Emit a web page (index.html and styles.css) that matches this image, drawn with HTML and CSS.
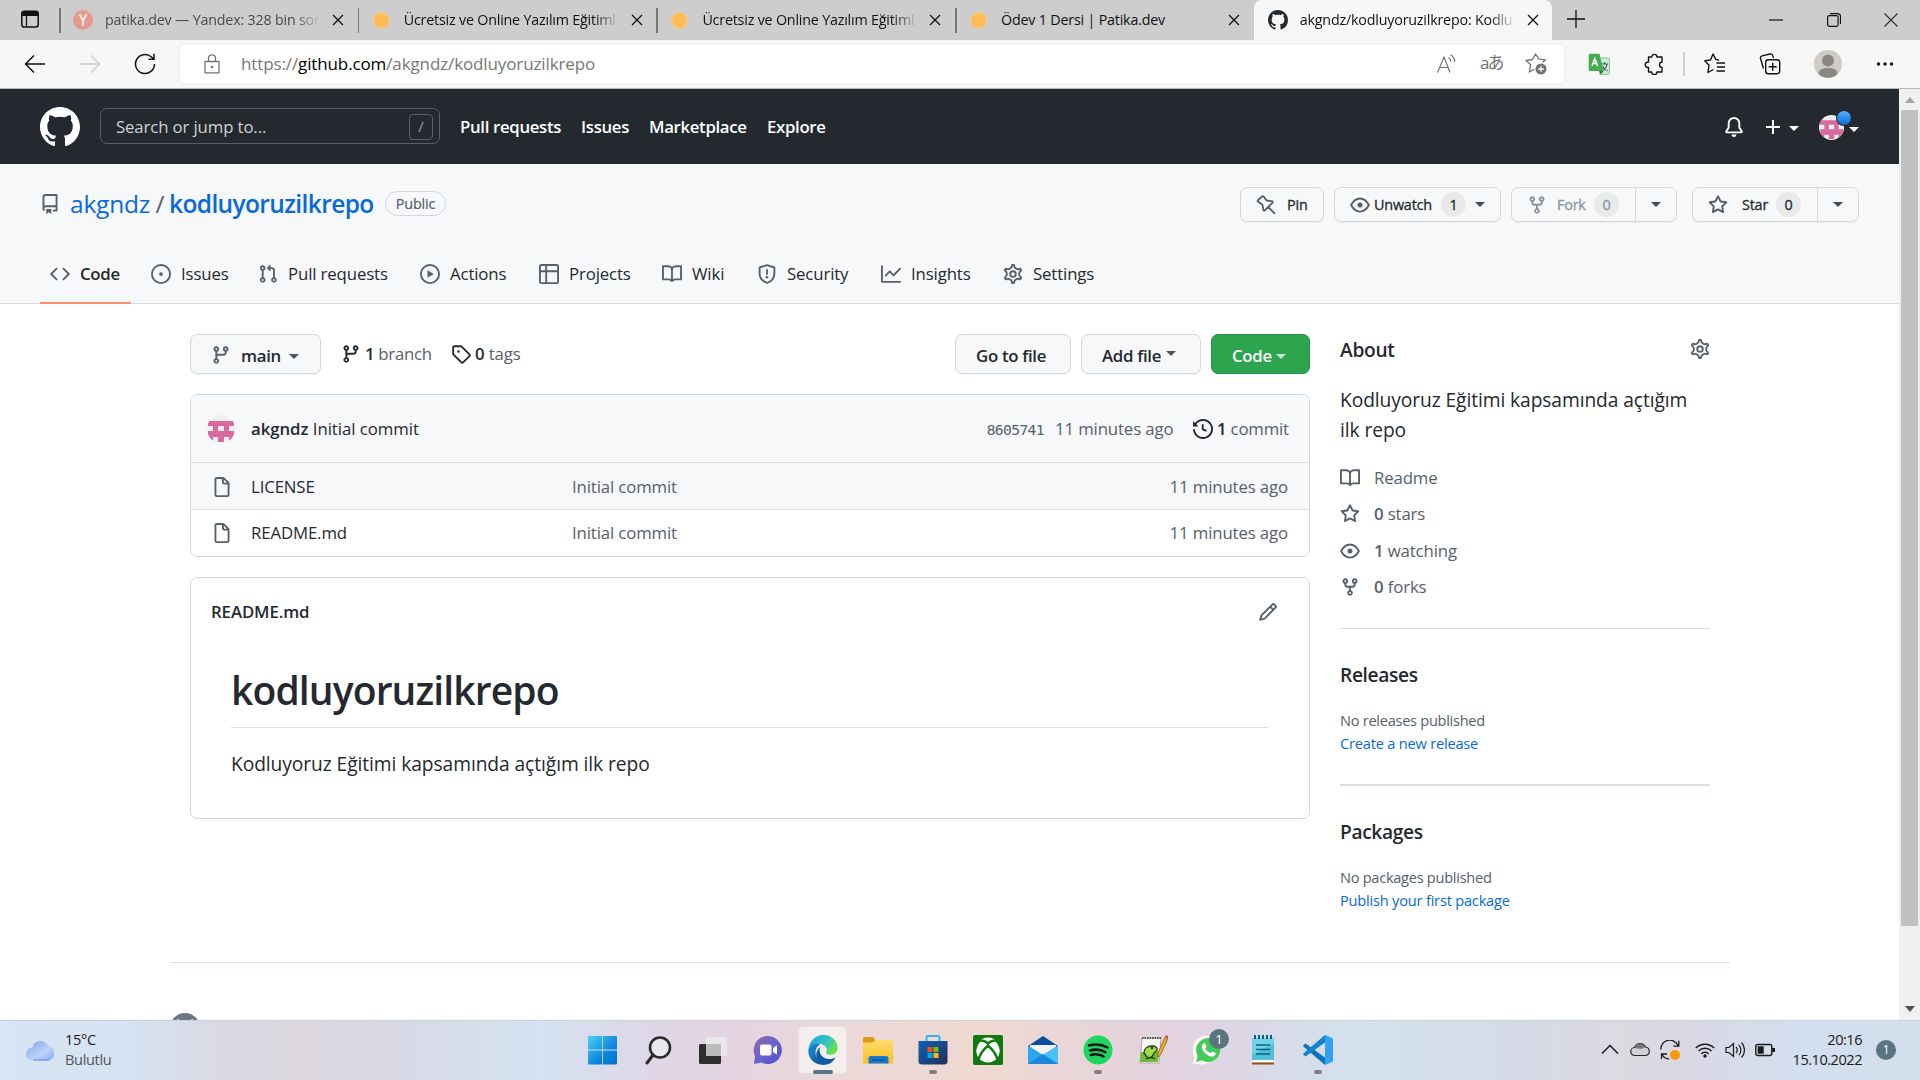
FILE: index.html
```html
<!DOCTYPE html>
<html lang="tr">
<head>
<meta charset="utf-8">
<title>akgndz/kodluyoruzilkrepo: Kodluyoruz Eğitimi kapsamında açtığım ilk repo</title>
<link rel="stylesheet" href="styles.css">
</head>
<body>
<svg class="defs" width="0" height="0">
  <defs>
    <linearGradient id="g-win" x1="0" y1="0" x2="1" y2="1"><stop offset="0" stop-color="#4cd0fb"/><stop offset=".6" stop-color="#0c86dc"/><stop offset="1" stop-color="#0072d0"/></linearGradient>
    <linearGradient id="g-cloud" x1="0" y1="0" x2="1" y2="1"><stop offset="0" stop-color="#7ea2ee"/><stop offset=".6" stop-color="#bdd3f8"/><stop offset="1" stop-color="#86a7ee"/></linearGradient>
    <linearGradient id="g-chat" x1="0" y1="0" x2="1" y2="1"><stop offset="0" stop-color="#8d6aa8"/><stop offset=".5" stop-color="#6b63cf"/><stop offset="1" stop-color="#4a4fc4"/></linearGradient>
    <linearGradient id="g-edge" x1="0" y1="0" x2="1" y2=".5"><stop offset="0" stop-color="#1b9de2"/><stop offset=".6" stop-color="#2fc3c9"/><stop offset="1" stop-color="#6be04e"/></linearGradient>
    <linearGradient id="g-edge2" x1="0" y1="0" x2="1" y2="1"><stop offset="0" stop-color="#1c93dd"/><stop offset="1" stop-color="#0b4a93"/></linearGradient>
    <linearGradient id="g-store" x1="0" y1="0" x2="1" y2="1"><stop offset="0" stop-color="#0b63b5"/><stop offset="1" stop-color="#222e58"/></linearGradient>
    <linearGradient id="g-folder" x1="0" y1="0" x2="0" y2="1"><stop offset="0" stop-color="#ffdc6b"/><stop offset="1" stop-color="#fcc021"/></linearGradient>
    <linearGradient id="g-dot" x1="0" y1="0" x2="0" y2="1"><stop offset="0" stop-color="#54aeff"/><stop offset="1" stop-color="#0969da"/></linearGradient>
  </defs>
  <symbol id="mark" viewBox="0 0 16 16"><path d="M8 0C3.58 0 0 3.58 0 8c0 3.54 2.29 6.53 5.47 7.59.4.07.55-.17.55-.38 0-.19-.01-.82-.01-1.49-2.01.37-2.53-.49-2.69-.94-.09-.23-.48-.94-.82-1.13-.28-.15-.68-.52-.01-.53.63-.01 1.08.58 1.23.82.72 1.21 1.87.87 2.33.66.07-.52.28-.87.51-1.07-1.78-.2-3.64-.89-3.64-3.95 0-.87.31-1.59.82-2.15-.08-.2-.36-1.02.08-2.12 0 0 .67-.21 2.2.82.64-.18 1.32-.27 2-.27.68 0 1.36.09 2 .27 1.53-1.04 2.2-.82 2.2-.82.44 1.1.16 1.92.08 2.12.51.56.82 1.27.82 2.15 0 3.07-1.87 3.75-3.65 3.95.29.25.54.73.54 1.48 0 1.07-.01 1.93-.01 2.2 0 .21.15.46.55.38A8.013 8.013 0 0016 8c0-4.42-3.58-8-8-8z"/></symbol>
  <symbol id="repo" viewBox="0 0 16 16"><path fill-rule="evenodd" d="M2 2.5A2.5 2.5 0 014.5 0h8.75a.75.75 0 01.75.75v12.5a.75.75 0 01-.75.75h-2.5a.75.75 0 110-1.5h1.75v-2h-8a1 1 0 00-.714 1.7.75.75 0 01-1.072 1.05A2.495 2.495 0 012 11.5v-9zm10.5-1V9h-8c-.356 0-.694.074-1 .208V2.5a1 1 0 011-1h8zM5 12.25v3.25a.25.25 0 00.4.2l1.45-1.087a.25.25 0 01.3 0L8.6 15.7a.25.25 0 00.4-.2v-3.25a.25.25 0 00-.25-.25h-3.5a.25.25 0 00-.25.25z"/></symbol>
  <symbol id="code" viewBox="0 0 16 16"><path d="M4.72 3.22a.75.75 0 011.06 1.06L2.06 8l3.72 3.72a.75.75 0 11-1.06 1.06L.47 8.53a.75.75 0 010-1.06l4.25-4.25zm6.56 0a.75.75 0 10-1.06 1.06L13.94 8l-3.72 3.72a.75.75 0 101.06 1.06l4.25-4.25a.75.75 0 000-1.06l-4.25-4.25z"/></symbol>
  <symbol id="issue" viewBox="0 0 16 16"><path fill-rule="evenodd" d="M8 9.5a1.5 1.5 0 100-3 1.5 1.5 0 000 3zM8 0a8 8 0 100 16A8 8 0 008 0zM1.5 8a6.5 6.5 0 1113 0 6.5 6.5 0 01-13 0z"/></symbol>
  <symbol id="pr" viewBox="0 0 16 16"><path fill-rule="evenodd" d="M7.177 3.073L9.573.677A.25.25 0 0110 .854v4.792a.25.25 0 01-.427.177L7.177 3.427a.25.25 0 010-.354zM3.75 2.5a.75.75 0 100 1.5.75.75 0 000-1.5zm-2.25.75a2.25 2.25 0 113 2.122v5.256a2.251 2.251 0 11-1.5 0V5.372A2.25 2.25 0 011.5 3.25zM11 2.5h-1V4h1a1 1 0 011 1v5.628a2.251 2.251 0 101.5 0V5A2.5 2.5 0 0011 2.5zm1 10.25a.75.75 0 111.5 0 .75.75 0 01-1.5 0zM3.75 12a.75.75 0 100 1.5.75.75 0 000-1.5z"/></symbol>
  <symbol id="play" viewBox="0 0 16 16"><path fill-rule="evenodd" d="M1.5 8a6.5 6.5 0 1113 0 6.5 6.5 0 01-13 0zM8 0a8 8 0 100 16A8 8 0 008 0zM6.379 5.227A.25.25 0 006 5.442v5.117a.25.25 0 00.379.214l4.264-2.559a.25.25 0 000-.428L6.379 5.227z"/></symbol>
  <symbol id="table" viewBox="0 0 16 16"><path fill="none" stroke="currentColor" stroke-width="1.5" d="M1.75.75h12.5a1 1 0 011 1v12.5a1 1 0 01-1 1H1.75a1 1 0 01-1-1V1.750a1 1 0 011-1zM5.75.75v14.5M.75 5.75h14.5"/></symbol>
  <symbol id="book" viewBox="0 0 16 16"><path fill-rule="evenodd" d="M0 1.75A.75.75 0 01.75 1h4.253c1.227 0 2.317.59 3 1.501A3.744 3.744 0 0111.006 1h4.245a.75.75 0 01.75.75v10.5a.75.75 0 01-.75.75h-4.507a2.25 2.25 0 00-1.591.659l-.622.621a.75.75 0 01-1.06 0l-.622-.621A2.25 2.25 0 005.258 13H.75a.75.75 0 01-.75-.75V1.75zm8.755 3a2.25 2.25 0 012.25-2.25H14.5v9h-3.757c-.71 0-1.4.201-1.992.572l.004-7.322zm-1.504 7.324l.004-5.073-.002-2.253A2.25 2.25 0 005.003 2.5H1.5v9h3.757a3.75 3.75 0 011.994.574z"/></symbol>
  <symbol id="shield" viewBox="0 0 16 16"><path fill="none" stroke="currentColor" stroke-width="1.5" stroke-linejoin="round" d="M8 .9l5.900 1.900v4.700c0 3.400-2.200 6.200-5.900 7.700-3.700-1.500-5.900-4.300-5.900-7.700V2.800z"/><path fill="none" stroke="currentColor" stroke-width="1.5" stroke-linecap="round" d="M8 4.700v3.300"/><circle cx="8" cy="10.600" r="1"/></symbol>
  <symbol id="graph" viewBox="0 0 16 16"><path fill-rule="evenodd" d="M1.500 1.750a.75.75 0 00-1.500 0v12.500c0 .414.336.75.75.75h14.500a.75.75 0 000-1.500H1.500V1.750zm14.280 2.530a.75.75 0 00-1.060-1.060L10 7.940 7.530 5.470a.75.75 0 00-1.060 0L3.220 8.720a.75.75 0 001.060 1.060L7 7.060l2.470 2.470a.75.75 0 001.060 0l5.250-5.250z"/></symbol>
  <symbol id="gear" viewBox="0 0 16 16"><g fill="none" stroke="currentColor" stroke-width="1.500"><circle cx="8" cy="8" r="2.250"/><path transform="translate(8 8) scale(1.110) translate(-8 -8)" stroke-width="1.350" d="M7.429 1.525a6.593 6.593 0 011.142 0c.036.003.108.036.137.146l.289 1.105c.147.56.55.967.997 1.189.174.086.341.183.501.29.417.278.97.423 1.53.27l1.102-.303c.11-.03.175.016.195.046.219.31.41.641.573.989.014.031.022.11-.059.19l-.815.806c-.411.406-.562.957-.53 1.456a4.588 4.588 0 010 .582c-.032.499.119 1.05.53 1.456l.815.806c.08.08.073.159.059.19a6.494 6.494 0 01-.573.99c-.02.029-.086.074-.195.045l-1.103-.303c-.559-.153-1.112-.008-1.529.27-.16.107-.327.204-.5.29-.449.222-.851.628-.998 1.189l-.289 1.105c-.029.11-.101.143-.137.146a6.613 6.613 0 01-1.142 0c-.036-.003-.108-.037-.137-.146l-.289-1.105c-.147-.56-.55-.967-.997-1.189a4.502 4.502 0 01-.501-.29c-.417-.278-.97-.423-1.53-.27l-1.102.303c-.11.03-.175-.016-.195-.046a6.492 6.492 0 01-.573-.989c-.014-.031-.022-.11.059-.19l.815-.806c.411-.406.562-.957.53-1.456a4.587 4.587 0 010-.582c.032-.499-.119-1.05-.53-1.456l-.815-.806c-.08-.08-.073-.159-.059-.19a6.44 6.44 0 01.573-.99c.02-.029.086-.075.195-.045l1.103.303c.559.153 1.112.008 1.529-.27.16-.107.327-.204.5-.29.449-.222.851-.628.998-1.189l.289-1.105c.029-.11.101-.143.137-.146z"/></g></symbol>
  <symbol id="branch" viewBox="0 0 16 16"><path fill-rule="evenodd" d="M11.75 2.5a.75.75 0 100 1.5.75.75 0 000-1.5zm-2.25.75a2.25 2.25 0 113 2.122V6A2.5 2.5 0 0110 8.5H6a1 1 0 00-1 1v1.128a2.251 2.251 0 11-1.5 0V5.372a2.25 2.25 0 111.5 0v1.836A2.492 2.492 0 016 7h4a1 1 0 001-1v-.628A2.25 2.25 0 019.5 3.25zM4.25 12a.75.75 0 100 1.5.75.75 0 000-1.5zM3.5 3.25a.75.75 0 111.5 0 .75.75 0 01-1.5 0z"/></symbol>
  <symbol id="fork" viewBox="0 0 16 16"><path fill-rule="evenodd" d="M5 3.25a.75.75 0 11-1.5 0 .75.75 0 011.5 0zm0 2.122a2.25 2.25 0 10-1.5 0v.878A2.25 2.25 0 005.75 8.5h1.5v2.128a2.251 2.251 0 101.5 0V8.5h1.5a2.25 2.25 0 002.25-2.25v-.878a2.25 2.25 0 10-1.5 0v.878a.75.75 0 01-.75.75h-4.5A.75.75 0 015 6.25v-.878zm3.75 7.378a.75.75 0 11-1.5 0 .75.75 0 011.5 0zm3-8.75a.75.75 0 100-1.5.75.75 0 000 1.5z"/></symbol>
  <symbol id="tag" viewBox="0 0 16 16"><path fill-rule="evenodd" d="M2.5 7.775V2.75a.25.25 0 01.25-.25h5.025a.25.25 0 01.177.073l6.25 6.25a.25.25 0 010 .354l-5.025 5.025a.25.25 0 01-.354 0l-6.25-6.25a.25.25 0 01-.073-.177zm-1.5 0V2.75C1 1.784 1.784 1 2.75 1h5.025c.464 0 .91.184 1.238.513l6.25 6.25a1.75 1.75 0 010 2.474l-5.026 5.026a1.75 1.75 0 01-2.474 0l-6.25-6.25A1.75 1.75 0 011 7.775zM6 5a1 1 0 100 2 1 1 0 000-2z"/></symbol>
  <symbol id="history" viewBox="0 0 16 16"><path fill-rule="evenodd" d="M1.643 3.143L.427 1.927A.25.25 0 000 2.104V5.75c0 .138.112.25.25.25h3.646a.25.25 0 00.177-.427L2.715 4.215a6.5 6.5 0 11-1.18 4.458.75.75 0 10-1.493.154 8.001 8.001 0 101.6-5.684zM7.75 4a.75.75 0 01.75.75v2.992l2.028.812a.75.75 0 01-.557 1.392l-2.5-1A.75.75 0 017 8.25v-3.5A.75.75 0 017.75 4z"/></symbol>
  <symbol id="file" viewBox="0 0 16 16"><path fill-rule="evenodd" d="M3.75 1.5a.25.25 0 00-.25.25v12.500c0 .138.112.25.25.25h8.500a.25.25 0 00.25-.25V6H9.750A1.750 1.750 0 018 4.250V1.500H3.750zm5.750.56v2.190c0 .138.112.25.25.25h2.190L9.500 2.060zM2 1.750C2 .784 2.784 0 3.750 0h5.086c.464 0 .909.184 1.237.513l3.414 3.414c.329.328.513.773.513 1.237v9.086A1.750 1.750 0 0112.250 16h-8.500A1.750 1.750 0 012 14.250V1.750z"/></symbol>
  <symbol id="pencil" viewBox="0 0 16 16"><path fill-rule="evenodd" d="M11.013 1.427a1.75 1.75 0 012.474 0l1.086 1.086a1.75 1.75 0 010 2.474l-8.61 8.61c-.21.21-.47.364-.756.445l-3.251.93a.75.75 0 01-.927-.928l.929-3.25a1.75 1.75 0 01.445-.758l8.61-8.61zm1.414 1.06a.25.25 0 00-.354 0L10.811 3.75l1.439 1.44 1.263-1.263a.25.25 0 000-.354l-1.086-1.086zM11.189 6.25L9.75 4.81l-6.286 6.287a.25.25 0 00-.064.108l-.558 1.953 1.953-.558a.249.249 0 00.108-.064l6.286-6.286z"/></symbol>
  <symbol id="star" viewBox="0 0 16 16"><path fill-rule="evenodd" d="M8 .25a.75.75 0 01.673.418l1.882 3.815 4.21.612a.75.75 0 01.416 1.279l-3.046 2.97.719 4.192a.75.75 0 01-1.088.791L8 12.347l-3.766 1.98a.75.75 0 01-1.088-.79l.72-4.194L.818 6.374a.75.75 0 01.416-1.28l4.21-.611L7.327.668A.75.75 0 018 .25zm0 2.445L6.615 5.5a.75.75 0 01-.564.41l-3.097.45 2.24 2.184a.75.75 0 01.216.664l-.528 3.084 2.769-1.456a.75.75 0 01.698 0l2.77 1.456-.53-3.084a.75.75 0 01.216-.664l2.24-2.183-3.096-.45a.75.75 0 01-.564-.41L8 2.694v.001z"/></symbol>
  <symbol id="eye" viewBox="0 0 16 16"><path fill="none" stroke="currentColor" stroke-width="1.500" stroke-linejoin="round" d="M.85 8C2.300 5.300 4.900 2.750 8 2.750S13.700 5.300 15.150 8C13.700 10.700 11.100 13.250 8 13.250S2.300 10.700.85 8z"/><circle cx="8" cy="8" r="2"/></symbol>
  <symbol id="bell" viewBox="0 0 16 16"><path d="M8 16a2 2 0 001.985-1.750c.017-.137-.097-.25-.235-.25h-3.500c-.138 0-.252.113-.235.25A2 2 0 008 16z"/><path fill="none" stroke="currentColor" stroke-width="1.500" stroke-linejoin="round" d="M3.750 5a4.250 4.250 0 018.500 0v2.950c0 .35.1.68.29.97l1.550 2.330c.35.500.100 1-.400 1H2.310c-.500 0-.750-.500-.400-1l1.550-2.330c.19-.29.29-.62.29-.97z"/></symbol>
  <symbol id="pin" viewBox="0 0 16 16"><path fill="none" stroke="currentColor" stroke-width="1.500" stroke-linejoin="round" stroke-linecap="round" d="M4.900 1.200c.3-.35.900-.35 1.200 0l1.700 2.400c.4.600 1 .95 1.700 1l3.200.35c.6.100.9.750.5 1.200L7.100 12.300c-.45.450-1.100.150-1.200-.450l-.5-3c-.100-.600-.500-1.200-1-1.600L1.700 5.300c-.450-.350-.450-.850-.1-1.200zM9.900 9.700l4.900 5"/></symbol>
  <symbol id="close" viewBox="0 0 12 12"><path fill="none" stroke="currentColor" stroke-width="1.300" d="M1 1l10 10M11 1L1 11"/></symbol>
  <symbol id="sun" viewBox="0 0 18 18"><circle cx="9" cy="9" r="8.800" fill="#fbc97c"/><circle cx="9" cy="9" r="7.600" fill="#ffbb55"/></symbol>
  <symbol id="identicon" viewBox="0 0 28 28"><circle cx="14" cy="14" r="14" fill="#f0f0f0"/><clipPath id="ic"><circle cx="14" cy="14" r="14"/></clipPath><path clip-path="url(#ic)" fill="#d86aa0" fill-rule="evenodd" d="M1 6h26v5h-5v5h5v11h-5v-5h-5v5h-6v-5H6v5H1V16h5v-5H1zM11 11v5h6v-5z"/></symbol>
</svg>

<div class="tabstrip">
  <div class="tab-menu"><svg class="i20" viewBox="0 0 20 20"><rect x="1.800" y="2.300" width="16.400" height="15.800" rx="2.500" fill="none" stroke="#111" stroke-width="1.500"/><path d="M1.500 7V4a2 2 0 012-2h13a2 2 0 012 2v3z"/><path d="M6.500 7v11" stroke="#111" stroke-width="1.300"/></svg></div>
  <div class="tab dim"><svg class="i20" viewBox="0 0 20 20"><circle cx="10" cy="10" r="10" fill="#e39a8c"/><path d="M6.500 4l3.500 6.500V16M13.500 4L10 10.500" fill="none" stroke="#f8e4e0" stroke-width="2.200"/></svg><span class="tab-title">patika.dev — Yandex: 328 bin son</span><svg class="x"><use href="#close"/></svg></div>
  <div class="tab"><svg class="fav"><use href="#sun"/></svg><span class="tab-title">Ücretsiz ve Online Yazılım Eğitiml</span><svg class="x"><use href="#close"/></svg></div>
  <div class="tab"><svg class="fav"><use href="#sun"/></svg><span class="tab-title">Ücretsiz ve Online Yazılım Eğitiml</span><svg class="x"><use href="#close"/></svg></div>
  <div class="tab"><svg class="fav"><use href="#sun"/></svg><span class="tab-title full">Ödev 1 Dersi | Patika.dev</span><svg class="x"><use href="#close"/></svg></div>
  <div class="tab active"><svg class="i20 gh"><use href="#mark"/></svg><span class="tab-title">akgndz/kodluyoruzilkrepo: Kodlu</span><svg class="x"><use href="#close"/></svg></div>
  <svg class="newtab" viewBox="0 0 18 18"><path d="M9 0v18M0 9h18" stroke="#111" stroke-width="1.300"/></svg>
  <div class="winbtns">
    <svg class="w14" viewBox="0 0 14 14"><path d="M0 7h14" stroke="#111" stroke-width="1.200"/></svg>
    <svg class="w14" viewBox="0 0 14 14"><rect x=".6" y="2.600" width="10.500" height="10.800" rx="1.800" fill="none" stroke="#111" stroke-width="1.200"/><path d="M3 .6h7.500a3 3 0 013 3V11" fill="none" stroke="#111" stroke-width="1.200"/></svg>
    <svg class="w14" viewBox="0 0 14 14"><path d="M.5.5l13 13M13.500.5L.5 13.500" stroke="#333" stroke-width="1.200"/></svg>
  </div>
</div>

<div class="toolbar">
  <div class="nav-btns">
    <svg class="i22" viewBox="0 0 22 22"><path d="M21 11H2M10 2.500L1.500 11l8.500 8.500" fill="none" stroke="#111" stroke-width="1.500"/></svg>
    <svg class="i22" viewBox="0 0 22 22"><path d="M1 11h19M12 2.500l8.500 8.500-8.500 8.500" fill="none" stroke="#ccc" stroke-width="1.500"/></svg>
    <svg class="i22" viewBox="0 0 22 22"><path d="M20.500 11a9.500 9.500 0 11-3.300-7.200l2.300 2M20 .8v5.400h-5.500" fill="none" stroke="#111" stroke-width="1.500"/></svg>
  </div>
  <div class="address">
    <svg class="i20 grey" viewBox="0 0 20 20"><path d="M3 7.500h14v11.300H3zM6.500 7.500V4.300a3.500 3.500 0 017 0v3.200" fill="none" stroke="currentColor" stroke-width="1.300" stroke-linejoin="round"/><circle cx="10" cy="13" r="1.300"/></svg>
    <span class="url">https://<b>github.com</b>/akgndz/kodluyoruzilkrepo</span>
    <span class="addr-icons">
      <svg class="i22 grey" viewBox="0 0 22 22"><path d="M1.500 19.500L8 4l6 15.500M3.700 14.500h8.400M12.500 4.500c1.600 1 2.300 2.300 2.300 4.300M14.500 1.800c2.700 1.600 4.200 4 4.200 7.200" fill="none" stroke="currentColor" stroke-width="1.200"/></svg>
      <span class="trans">aあ</span>
      <svg class="i22 grey" viewBox="0 0 22 22"><path d="M17.500 9.500l3-2.700-6.600-.6L10.500 1 7.500 6.500l-6.700.8 4.900 4.500-1.400 7.200 5-2.700" fill="none" stroke="currentColor" stroke-width="1.300" stroke-linejoin="round"/><circle cx="16" cy="16" r="5.500"/><path d="M16 13.200v5.600M13.200 16h5.600" stroke="#fff" stroke-width="1.300"/></svg>
    </span>
  </div>
  <div class="ext">
    <svg class="i22" viewBox="0 0 22 22"><path d="M10 5h10.500a1 1 0 011 1v14.500a1 1 0 01-1 1H12z" fill="#cdebd2" stroke="#7bbb86" stroke-width=".8"/><path d="M13 11h7M16.500 9v2M14 18c3-1.500 4.500-4 5-7M14.500 13c1 2.500 2.500 4 5 5" fill="none" stroke="#3c5a70" stroke-width="1.200"/><path d="M2 .8h9.500L15.500 18H2a1.300 1.300 0 01-1.300-1.300V2.100A1.300 1.300 0 012 .8z" fill="#43ad50"/><path d="M11 18h4.500L13 21.500z" fill="#237a32"/><path d="M4 13L6.800 5.500 9.600 13M5 10.500h3.600" fill="none" stroke="#fff" stroke-width="1.500"/></svg>
    <svg class="i22" viewBox="0 0 22 22"><path d="M5.500 4h3.200a2.600 2.600 0 015.200 0H19v5a2.700 2.700 0 00-2.500 2.800c0 1.500 1 2.700 2.500 2.700v4.500h-5.100a2.600 2.600 0 01-5.200 0H5.500v-4.500a2.800 2.800 0 110-5.500z" fill="none" stroke="#111" stroke-width="1.400" stroke-linejoin="round"/></svg>
    <i class="vsep"></i>
    <svg class="i22" viewBox="0 0 22 22"><path d="M15 7.200l-3.200-.8L9 1 6.500 7l-5.700.8L5 12.200l-1 7.300 5.500-3M12.500 10H21M13 14h8M12.500 18H21" fill="none" stroke="#111" stroke-width="1.400" stroke-linejoin="round"/></svg>
    <svg class="i22" viewBox="0 0 22 22"><path d="M4.500 15.500L1.500 5.500c-.3-1.300.3-2.200 1.500-2.600L11 1c1.200-.3 2.200.2 2.600 1.400L14.500 5" fill="none" stroke="#111" stroke-width="1.400"/><rect x="6.700" y="6.700" width="14" height="14" rx="2.500" fill="none" stroke="#111" stroke-width="1.400"/><path d="M13.700 9.700v8M9.700 13.700h8" stroke="#111" stroke-width="1.400"/></svg>
    <svg class="i28" viewBox="0 0 28 28"><circle cx="14" cy="14" r="14" fill="#cfccc8"/><circle cx="14" cy="10.500" r="6" fill="#8b8682"/><path d="M4.500 24c.5-4.500 4-6 9.500-6s9 1.500 9.500 6a14 14 0 01-19 0z" fill="#8b8682"/></svg>
    <svg class="i18" viewBox="0 0 18 18"><circle cx="2.500" cy="9" r="1.700"/><circle cx="9" cy="9" r="1.700"/><circle cx="15.500" cy="9" r="1.700"/></svg>
  </div>
</div>

<div class="viewport">
  <div class="page">
    <header class="gh-header">
      <svg class="logo"><use href="#mark"/></svg>
      <div class="search"><span>Search or jump to...</span><kbd>/</kbd></div>
      <nav class="gh-nav"><a class="n1">Pull requests</a><a class="n2">Issues</a><a class="n3">Marketplace</a><a class="n4">Explore</a></nav>
      <div class="gh-right">
        <svg class="i20"><use href="#bell"/></svg>
        <span class="plus"><svg class="i16" viewBox="0 0 16 16"><path d="M8 1v14M1 8h14" stroke="currentColor" stroke-width="2"/></svg><i class="caret"></i></span>
        <span class="me"><svg class="i25"><use href="#identicon"/></svg><svg class="bluedot" viewBox="0 0 16 16"><circle cx="8" cy="8" r="8" fill="#24292f"/><circle cx="8" cy="8" r="6.900" fill="url(#g-dot)"/></svg><i class="caret"></i></span>
      </div>
    </header>

    <section class="repohead">
      <div class="title-row">
        <svg class="i20 muted"><use href="#repo"/></svg>
        <span class="crumb"><a class="owner">akgndz</a><span class="slash">/</span><a class="name">kodluyoruzilkrepo</a></span>
        <span class="pill">Public</span>
        <div class="actions">
          <button class="btn-sm pinb"><svg class="i20"><use href="#pin"/></svg><span>Pin</span></button>
          <button class="btn-sm watchb"><svg class="i20"><use href="#eye"/></svg><span>Unwatch</span><em>1</em><i class="caret"></i></button>
          <button class="btn-sm forkb"><svg class="i20"><use href="#fork"/></svg><span>Fork</span><em>0</em><span class="drop"><i class="caret"></i></span></button>
          <button class="btn-sm starb"><svg class="i20"><use href="#star"/></svg><span>Star</span><em>0</em><span class="drop"><i class="caret"></i></span></button>
        </div>
      </div>
      <nav class="repo-nav">
        <a class="sel w91"><svg class="i20"><use href="#code"/></svg><span>Code</span></a>
        <a class="w97"><svg class="i20"><use href="#issue"/></svg><span>Issues</span></a>
        <a class="w152"><svg class="i20"><use href="#pr"/></svg><span>Pull requests</span></a>
        <a class="w109"><svg class="i20"><use href="#play"/></svg><span>Actions</span></a>
        <a class="w113"><svg class="i20"><use href="#table"/></svg><span>Projects</span></a>
        <a class="w85"><svg class="i20"><use href="#book"/></svg><span>Wiki</span></a>
        <a class="w114"><svg class="i20"><use href="#shield"/></svg><span>Security</span></a>
        <a class="w112"><svg class="i20"><use href="#graph"/></svg><span>Insights</span></a>
        <a class="w113"><svg class="i20"><use href="#gear"/></svg><span>Settings</span></a>
      </nav>
    </section>

    <main class="content">
      <div class="main-col">
        <div class="filebar">
          <button class="btn mainb"><svg class="i20 muted"><use href="#branch"/></svg><span>main</span><i class="caret"></i></button>
          <a class="stat branches"><svg class="i20"><use href="#branch"/></svg><span><b>1</b> branch</span></a>
          <a class="stat tags"><svg class="i20"><use href="#tag"/></svg><span><b>0</b> tags</span></a>
          <div class="file-actions">
            <button class="btn goto">Go to file</button>
            <button class="btn add">Add file<i class="caret"></i></button>
            <button class="btn green">Code<i class="caret"></i></button>
          </div>
        </div>
        <div class="box files">
          <div class="commit">
            <svg class="i28"><use href="#identicon"/></svg>
            <span class="msg"><b>akgndz</b> Initial commit</span>
            <code>8605741</code><span class="ago">11 minutes ago</span>
            <svg class="i20"><use href="#history"/></svg><span class="count"><b>1</b> commit</span>
          </div>
          <div class="row hover"><svg class="i20"><use href="#file"/></svg><a>LICENSE</a><span>Initial commit</span><span class="when">11 minutes ago</span></div>
          <div class="row"><svg class="i20"><use href="#file"/></svg><a>README.md</a><span>Initial commit</span><span class="when">11 minutes ago</span></div>
        </div>
        <div class="box readme">
          <div class="readme-head"><b>README.md</b><svg class="i20"><use href="#pencil"/></svg></div>
          <h1><span>kodluyoruzilkrepo</span></h1>
          <p>Kodluyoruz Eğitimi kapsamında açtığım ilk repo</p>
        </div>
      </div>
      <aside class="side">
        <div class="about-head"><h2>About</h2><svg class="i20"><use href="#gear"/></svg></div>
        <p class="desc">Kodluyoruz Eğitimi kapsamında açtığım ilk repo</p>
        <ul>
          <li><svg class="i20"><use href="#book"/></svg><span>Readme</span></li>
          <li><svg class="i20"><use href="#star"/></svg><span><b>0</b> stars</span></li>
          <li><svg class="i20"><use href="#eye"/></svg><span><b>1</b> watching</span></li>
          <li><svg class="i20"><use href="#fork"/></svg><span><b>0</b> forks</span></li>
        </ul>
        <div class="panel rel"><h2>Releases</h2><p>No releases published</p><a>Create a new release</a></div>
        <div class="panel pkg"><h2>Packages</h2><p>No packages published</p><a>Publish your first package</a></div>
      </aside>
    </main>
    <footer class="gh-footer"><svg class="footmark"><use href="#mark"/></svg></footer>
  </div>
  <div class="scroll">
    <svg class="sa" viewBox="0 0 10 6"><path d="M0 6l5-6 5 6z" fill="#a3a3a3"/></svg>
    <div class="thumb"></div>
    <svg class="sa" viewBox="0 0 10 6"><path d="M0 0l5 6 5-6z" fill="#505050"/></svg>
  </div>
</div>

<div class="taskbar">
  <div class="weather">
    <svg class="cloud" viewBox="0 0 30 22"><path d="M7 21.500a6.500 6.500 0 01-.8-13A8.500 8.500 0 0122 6.500a7.700 7.700 0 01.5 15z" fill="url(#g-cloud)"/><path d="M7 21h16" stroke="#5b86e6" stroke-width="1"/></svg>
    <div><div class="deg">15°C</div><div class="cond">Bulutlu</div></div>
  </div>
  <div class="apps">
    <span class="app"><svg class="i30" viewBox="0 0 30 30"><path fill="url(#g-win)" d="M0 2a1 1 0 011-1h13.100v13.600H0zM14.900 1H28a1 1 0 011 1v12.600H14.900zM0 15.400h14.100V29.500H1a1 1 0 01-1-1zM14.900 15.400H29V28.500a1 1 0 01-1 1H14.900z"/></svg></span>
    <span class="app"><svg class="i30" viewBox="0 0 30 30"><circle cx="17" cy="12.500" r="10" fill="#e8e6ee" stroke="#2b2b2b" stroke-width="2.600"/><path d="M10 20l-6 8" stroke="#2b2b2b" stroke-width="3" stroke-linecap="round"/></svg></span>
    <span class="app"><svg class="i30" viewBox="0 0 30 30"><rect x="1" y="9" width="22" height="20" rx="1.500" fill="#2f2f2f"/><rect x="8" y="2" width="21" height="19" rx="1.500" fill="#e9e7e9"/><path d="M8 9h15v12H8z" fill="#bdbbbd"/></svg></span>
    <span class="app"><svg class="i30" viewBox="0 0 30 30"><path d="M15 1a14 14 0 11-6.500 26.500L1 29l1-8A14 14 0 0115 1z" fill="url(#g-chat)"/><rect x="7" y="9.500" width="11.500" height="11" rx="2" fill="#fff"/><path d="M20 13l4-2.800v9.600L20 17z" fill="#fff"/></svg></span>
    <span class="app on"><svg class="i30" viewBox="0 0 30 30"><path d="M.5 14C1.500 5.500 8 0 15.500 0 24 0 29.700 6.500 29.700 12.800c0 4.500-3.500 7-7.200 7-3.300 0-5-1-4.400-2 1.300-1.800.9-5.800-2.600-7.800C10 7 2.500 9 .5 14z" fill="url(#g-edge)"/><path d="M.4 14.500C2 9 8 7.200 12.500 9c-3 1.500-5 4.500-5 8.500 0 5.500 3.500 10.500 9.500 12-9 1.500-17.500-5.500-16.600-15z" fill="url(#g-edge2)"/><path d="M12.300 12c-2.500 5 1.500 12 8.700 12 2.800 0 5-.8 6.700-1.600-2.500 4.500-7 7.600-12 7.400-7.500-1.500-10.500-12.300-3.400-17.800z" fill="#0f5cab"/></svg><i class="ind wide"></i></span>
    <span class="app"><svg class="i30" viewBox="0 0 30 30"><path d="M0 3.500A1.500 1.500 0 011.500 2H10l3 4-3 4H0z" fill="#dd9a12"/><path d="M0 7.500h9.500L12.500 5H30v22a1.500 1.500 0 01-1.500 1.500h-27A1.500 1.500 0 010 27z" fill="url(#g-folder)"/><path d="M5.500 28.500v-5a2.500 2.500 0 012.500-2.500h15a2.500 2.500 0 012.500 2.500v5z" fill="#1578cf"/><path d="M9 25h13" stroke="#0b4c93" stroke-width="1.300"/></svg></span>
    <span class="app"><svg class="i30" viewBox="0 0 30 30"><path d="M8.500 7V2.500A1.500 1.500 0 0110 1h10a1.500 1.500 0 011.500 1.500V7" fill="none" stroke="#2cb6f0" stroke-width="2"/><path d="M.5 6h29v20a3.500 3.500 0 01-3.500 3.500H4A3.500 3.500 0 01.5 26z" fill="url(#g-store)"/><path fill="#f25022" d="M9.500 12h5v5h-5z"/><path fill="#7fba00" d="M15.500 12h5v5h-5z"/><path fill="#00a4ef" d="M9.500 18h5v5h-5z"/><path fill="#ffb900" d="M15.500 18h5v5h-5z"/></svg><i class="ind"></i></span>
    <span class="app"><svg class="i30" viewBox="0 0 30 30"><rect width="30" height="30" rx="2" fill="#107c10"/><circle cx="15" cy="15" r="12.500" fill="#fff"/><path d="M6.500 6C9 4.500 12.500 6.500 15 8.500 17.500 6.500 21 4.500 23.500 6 27 9.500 27.500 12 28 16c-.5 4-1.500 7-3.500 9C23.500 20 19 14 15 10.500 11 14 6.500 20 5.500 25 3.500 23 2.500 20 2 16c.5-4 1-6.500 4.500-10z" fill="none" stroke="#107c10" stroke-width="2.400"/></svg></span>
    <span class="app"><svg class="i30" viewBox="0 0 30 30"><path d="M0 11L15 1l15 10-2 5H2z" fill="#0a4f9c"/><path d="M2 10h26v12H2z" fill="#f2f2f2"/><path d="M0 10.500L15 20l15-9.500V29H0z" fill="#2aa5ee"/><path d="M15 20l15-9.500V29z" fill="#45c3f7"/><path d="M0 29l15-10 15 10z" fill="#1c86dd"/></svg></span>
    <span class="app"><svg class="i30" viewBox="0 0 30 30"><circle cx="15" cy="15" r="14.500" fill="#1ed760"/><path d="M6 10.500c6-1.800 13-1.200 18.500 2M7 15.500c5.500-1.500 11-1 15.500 1.700M7.800 20c4.500-1.200 9-.7 12.700 1.500" fill="none" stroke="#101010" stroke-width="2.500" stroke-linecap="round"/></svg><i class="ind"></i></span>
    <span class="app"><svg class="i30" viewBox="0 0 30 30"><path d="M4 3h19l-2 25H2z" fill="#f6f6f2" stroke="#999" stroke-width=".8"/><path d="M4 3h19" stroke="#555" stroke-width="2" stroke-dasharray="1.500 1"/><path d="M3 17l18-1-1 11H2z" fill="#74b83c"/><path d="M6 18c0-4 3-7 8-7 4 0 6 2 5 4s-3 2-4 5-4 3-6 2z" fill="#a3d94f" stroke="#25401a" stroke-width="1.300"/><circle cx="14" cy="13" r="1.200"/><path d="M8 24c3-2 6-2 9 0" fill="none" stroke="#25401a" stroke-width="1.500"/><path d="M27 2l3 1.500L22.500 20 20 22l-.2-3.500z" fill="#f5a623" stroke="#7a5a2a" stroke-width=".7"/><path d="M27 2l1-2 3 1.500-1 2z" fill="#c55"/></svg></span>
    <span class="app"><svg class="i30" viewBox="0 0 30 30"><path d="M15 .5A14.500 14.500 0 112 28L0 29.800l1.500-7.500A14.500 14.500 0 0115 .5z" fill="#fff" transform="translate(0 0)"/><path d="M15 3a12 12 0 11-6 22.300L3 27l1.700-6A12 12 0 0115 3z" fill="#41cb57"/><path d="M10.500 8.500c1-.6 1.700-.3 2 .5l1 2.500c.2.700-.8 1.500-1.200 2 1.300 2.300 3 3.600 5.300 4.600.6-.5 1.300-1.900 2-1.600l2.700 1.300c.9.500.2 2.300-.8 3.100-2.200 1.700-6.500 0-9.500-3-3.500-3.500-4.500-7.500-1.500-9.400z" fill="#fff"/></svg><i class="notif">1</i></span>
    <span class="app"><svg class="i30" viewBox="0 0 30 30"><path d="M4 3h22v23H4z" fill="#4fbfd9"/><path d="M4 3h22v5L4 20z" fill="#6fd3e6"/><path d="M8 10h14M8 14.500h14M8 19h14" stroke="#0c5f7f" stroke-width="1.600"/><path d="M7 0v4M11 0v4M15 0v4M19 0v4M23 0v4" stroke="#0c5f7f" stroke-width="2"/><path d="M4 25h22v2.500H4z" fill="#fff"/><path d="M4 28.500h22" stroke="#9a4a10" stroke-width="2"/></svg></span>
    <span class="app"><svg class="i30" viewBox="0 0 30 30"><path d="M22 0l8 3.500v23L22 30z" fill="#2fa3f2"/><path d="M0 10.500l2.500-2L22 22.500V30L1 12z" fill="#0a74bd"/><path d="M0 19.500l2.500 2L22 7.500V0L1 18z" fill="#1484cf"/></svg><i class="ind"></i></span>
  </div>
  <div class="tray">
    <svg class="t20" viewBox="0 0 20 20"><path d="M2 13.500L10 5.500l8 8" fill="none" stroke="#1b1b1b" stroke-width="1.500"/></svg>
    <svg class="t20" viewBox="0 0 20 20"><path d="M5 15.500a4 4 0 01-.5-8A6 6 0 0115.500 7a4.300 4.300 0 01.2 8.500z" fill="#d2d2d4" stroke="#2a2a2a" stroke-width="1.200"/><path d="M4.500 8A5.500 5.500 0 0115 7.500L11 9z" fill="#777"/></svg>
    <svg class="t20" viewBox="0 0 20 20"><path d="M.8 9.500A9 9 0 0118 5.500M18.800.8v5.400h-5.400M9 19a9 9 0 01-7-4.500M1.500 19v-5H7" fill="none" stroke="#1b1b1b" stroke-width="1.300"/><circle cx="15" cy="15" r="5" fill="#ff9800"/></svg>
    <svg class="t20 wifi" viewBox="0 0 20 20"><path d="M.8 8a13 13 0 0118.400 0M3.500 11a9.200 9.200 0 0113 0M6.300 13.800a5.200 5.200 0 017.400 0" fill="none" stroke="#1b1b1b" stroke-width="1.400"/><circle cx="10" cy="16" r="1.700"/></svg>
    <svg class="t20" viewBox="0 0 20 20"><path d="M1 7.500h3l4.500-4v13L4 12.500H1zM11 7a4.500 4.500 0 010 6M13.800 4.800a7.500 7.500 0 010 10.400M16.500 2.500a11 11 0 010 15" fill="none" stroke="#1b1b1b" stroke-width="1.200"/></svg>
    <svg class="t20" viewBox="0 0 20 20"><rect x=".8" y="4.500" width="16" height="11" rx="2" fill="none" stroke="#1b1b1b" stroke-width="1.400"/><path d="M2.700 6.300h6v7.400h-6zM17 8h3v4h-3z"/></svg>
    <div class="clock"><div>20:16</div><div>15.10.2022</div></div>
    <span class="badge">1</span>
  </div>
</div>
</body>
</html>
```
FILE: styles.css
```css
* { box-sizing: border-box; }
body {
  margin: 0; width: 1920px; height: 1080px; overflow: hidden; background: #fff; color: #24292f;
  font-family: "Open Sans", "Noto Sans", "Noto Sans CJK JP", sans-serif;
  font-size: 16.8px; line-height: 26px; letter-spacing: -0.13px;
  display: flex; flex-direction: column;
}
svg { display: block; flex: none; fill: currentColor; }
b { font-weight: 600; }
h1, h2, p, ul { margin: 0; padding: 0; }
.defs { position: absolute; }
.i16 { width: 16px; height: 16px; } .i18 { width: 18px; height: 18px; }
.i20 { width: 20px; height: 20px; } .i22 { width: 22px; height: 22px; }
.i25 { width: 25px; height: 25px; } .i28 { width: 28px; height: 28px; }
.i30 { width: 30px; height: 30px; }
.caret { display: inline-block; flex: none; border: 5px solid transparent; border-top-color: currentColor; border-bottom: 0; }
.muted { color: #57606a; }

/* browser tabs */
.tabstrip { height: 40px; flex: none; display: flex; background: #cdcdcd; align-items: stretch; font-size: 14.3px; letter-spacing: -.2px; color: #111; }
.tab-menu { width: 59px; padding: 9px 0 0 20px; }
.tab { width: 298.7px; display: flex; align-items: center; padding-left: 14px; position: relative; }
.tab:not(.active)::before { content: ""; position: absolute; left: 0; top: 8px; width: 1.5px; height: 25px; background: #777; }
.tab .fav { width: 17px; height: 17px; margin: 0 2px 0 0; }
.tab:not(.dim):not(.active) { padding-left: 15px; }
.tab-title { width: 216px; margin-left: 12px; overflow: hidden; white-space: nowrap; -webkit-mask-image: linear-gradient(90deg, #000 88%, transparent 100%); mask-image: linear-gradient(90deg, #000 88%, transparent 100%); }
.tab-title.full { -webkit-mask-image: none; mask-image: none; }
.dim .tab-title { color: #4a4a4a; }
.x { width: 12px; height: 12px; margin-left: 11px; }
.active { background: #f7f7f7; border-radius: 8px 8px 0 0; color: #111; }
.gh { color: #24292f; }
.newtab { width: 18px; height: 18px; margin: 10px 0 0 15px; }
.winbtns { margin-left: auto; display: flex; align-items: center; gap: 43.5px; padding-right: 22px; }
.w14 { width: 14px; height: 14px; }

/* browser toolbar */
.toolbar { height: 49px; flex: none; display: flex; align-items: center; background: #f7f7f7; border-bottom: 1px solid #b9b9b7; color: #111; }
.nav-btns { display: flex; gap: 33px; width: 180px; padding-left: 24px; }
.address { width: 1384px; height: 38px; background: #fff; border-radius: 5px; box-shadow: 0 0 4px #ececec; display: flex; align-items: center; padding: 0 17px 0 22px; }
.grey { color: #737373; }
.url { margin-left: 19px; font-size: 17px; color: #777; letter-spacing: -.12px; white-space: nowrap; }
.url b { color: #000; font-weight: 400; }
.addr-icons { margin-left: auto; display: flex; align-items: center; gap: 22px; }
.trans { color: #737373; font-size: 17px; width: 23px; letter-spacing: -2px; margin-top: -3px; white-space: nowrap; }
.ext { flex: 1; display: flex; align-items: center; padding-left: 24px; }
.ext > svg:nth-child(2) { margin-left: 33px; }
.vsep { width: 1.5px; height: 24px; background: #cfcfcf; margin: 0 19px 0 18px; }
.ext > svg:nth-child(5) { margin-left: 33px; }
.ext > svg:nth-child(6) { margin-left: 33px; }
.ext > svg:nth-child(7) { margin-left: 34px; }

.viewport { height: 931px; flex: none; display: flex; overflow: hidden; }
.page { width: 1899px; overflow: hidden; }
.scroll { width: 21px; background: #f0f0f0; display: flex; flex-direction: column; align-items: center; padding: 8px 0; justify-content: space-between; }
.sa { width: 10px; height: 6px; }
.thumb { width: 17px; height: 816px; background: #c1c1c1; margin-top: -73px; }

/* site header */
.gh-header { height: 75px; background: #24292f; color: #fff; display: flex; align-items: center; padding-left: 40px; }
.logo { width: 40px; height: 40px; }
.search { width: 340px; height: 36px; margin-left: 20px; margin-top: -1px; border: 1px solid #57606a; border-radius: 7px; display: flex; align-items: center; justify-content: space-between; padding: 1px 6px 0 15px; color: #cfd2d5; }
kbd { width: 24px; height: 26px; border: 1px solid #57606a; border-radius: 4px; font: 15px/23px "Open Sans", sans-serif; text-align: center; color: #9aa0a6; }
.gh-nav { display: flex; font-weight: 600; margin-left: 20px; letter-spacing: -.33px; white-space: nowrap; }
.n1 { width: 121px; } .n2 { width: 68px; } .n3 { width: 118px; }
.gh-right { margin-left: auto; display: flex; align-items: center; padding-right: 40px; }
.plus { display: flex; align-items: center; gap: 8px; margin-left: 21px; }
.plus .caret, .me .caret { margin-top: 3px; }
.me { display: flex; align-items: center; gap: 5px; margin-left: 20px; margin-top: 2px; position: relative; }
.bluedot { position: absolute; left: 17px; top: -5px; width: 16px; height: 16px; }

/* repo heading */
.repohead { height: 140px; background: #f6f8fa; border-bottom: 1px solid #d3d9e0; }
.title-row { height: 79px; display: flex; align-items: center; padding: 2px 40px 0 40px; }
.crumb { display: flex; align-items: center; font-size: 24.5px; margin: -1px 0 0 10px; width: 306px; color: #0969da; white-space: nowrap; letter-spacing: -.2px; }
.slash { color: #57606a; width: 18px; text-align: center; }
.owner { width: 81px; }
.name { font-weight: 600; letter-spacing: -.62px; }
.title-row > svg { margin-top: -2px; }
.pill { width: 61px; height: 25px; margin-left: 9px; margin-top: -3px; border: 1px solid #d0d7de; border-radius: 13px; font-size: 14.4px; line-height: 23px; text-align: center; color: #57606a; -webkit-text-stroke: .2px; }
.actions { margin-left: auto; display: flex; }
button { font-family: inherit; color: #24292f; letter-spacing: -.3px; }
.btn-sm { height: 35px; border: 1px solid #d5d8da; border-radius: 7px; background: #f6f8fa; display: flex; align-items: center; padding: 0 0 0 15px; font-size: 14.4px; font-weight: 400; box-shadow: 0 1px 0 rgba(27,31,36,.04); white-space: nowrap; -webkit-text-stroke: .3px; letter-spacing: -.2px; }
.btn-sm svg { color: #57606a; }
.btn-sm em { font-style: normal; background: #e7e9eb; border-radius: 13px; width: 25px; height: 25px; line-height: 25px; text-align: center; }
.pinb { width: 84px; margin-right: 10px; } .pinb span { margin-left: 11px; }
.watchb { width: 167px; margin-right: 10px; } .watchb span { width: 67px; margin-left: 4px; text-align: left; } .watchb .caret { margin-left: 9px; color: #424a53; }
.forkb { width: 166px; margin-right: 15px; color: #8c959f; } .forkb > span:nth-of-type(1) { width: 37px; margin-left: 10px; text-align: left; }
.forkb svg { color: #8c959f; }
.starb { width: 167px; } .starb > span:nth-of-type(1) { width: 34px; margin-left: 14px; text-align: left; }
.drop { margin-left: auto; width: 41px; height: 100%; border-left: 1px solid #d5d8da; display: flex; align-items: center; justify-content: center; color: #424a53; }
.repo-nav { height: 61px; display: flex; gap: 10px; padding-left: 40px; }
.repo-nav a { display: flex; align-items: center; gap: 10px; padding: 0 0 0 10px; white-space: nowrap; }
.repo-nav span { padding-top: 1px; }
.repo-nav svg { color: #57606a; }
.repo-nav .sel { font-weight: 600; letter-spacing: -.3px; border-bottom: 2.5px solid #fd8c73; padding-top: 2px; }
.w91 { width: 91px; } .w97 { width: 97px; } .w152 { width: 152px; } .w109 { width: 109px; } .w113 { width: 113px; } .w85 { width: 85px; } .w114 { width: 114px; } .w112 { width: 112px; }

/* content */
.content { display: flex; padding: 30px 0 0 190px; gap: 30px; height: 658px; }
.main-col { width: 1120px; }
.filebar { display: flex; height: 40px; margin-bottom: 20px; }
.btn { height: 40px; border: 1px solid #d5d8da; border-radius: 7px; background: #f6f8fa; display: flex; align-items: center; font-size: 16.8px; font-weight: 600; letter-spacing: -.3px; padding: 2px 0 0 20px; box-shadow: 0 1px 0 rgba(27,31,36,.04); white-space: nowrap; }
.btn .caret { color: #4d545c; }
.mainb { width: 131px; } .mainb span { width: 48px; margin-left: 10px; text-align: left; } .mainb .caret { margin-top: 2px; }
.stat { display: flex; align-items: center; height: 40px; color: #57606a; gap: 4px; }
.stat svg, .stat b, .count b { color: #24292f; }
.branches { margin-left: 20px; width: 110px; letter-spacing: -.3px; }
.file-actions { margin-left: auto; display: flex; gap: 10px; }
.goto { width: 116px; } .add { width: 120px; } .add .caret { margin: -4px 0 0 5px; }
.green { width: 99px; background: #2da44e; border-color: #2a9147; color: #fff; } .btn.green .caret { margin: 3px 0 0 4px; color: #cfeed6; }
.box { border: 1px solid #d0d7de; border-radius: 7px; overflow: hidden; }
.files { height: 163px; margin-bottom: 20px; }
.commit { height: 68px; background: #f6f8fa; border-bottom: 1px solid #d8dee4; display: flex; align-items: center; padding: 0 21px 0 16px; white-space: nowrap; }
.msg { margin-left: 16px; margin-right: auto; letter-spacing: -.05px; }
code { font: 14.6px "DejaVu Sans Mono", monospace; letter-spacing: -.6px; color: #57606a; margin: 2px 11px 0 0; }
.ago { color: #57606a; width: 120px; }
.commit .i20 { margin-left: 18px; }
.count { color: #57606a; width: 71px; margin-left: 4px; white-space: nowrap; letter-spacing: -.2px; }
.row { height: 46px; display: grid; grid-template-columns: 39px 321px 1fr auto; align-items: center; padding: 2px 21px 0 21px; color: #57606a; }
.row + .row { border-top: 1px solid #d8dee4; height: 48px; padding: 0 21px 2px 21px; }
.row a { color: #24292f; }
.hover { background: #f6f8fa; }
.readme { height: 242px; }
.readme-head { height: 69px; display: flex; justify-content: space-between; align-items: center; padding: 0 31px 2px 20px; color: #24292f; letter-spacing: -.1px; }
.readme-head svg { color: #57606a; }
.readme h1 { margin: 11px 41px 0 40px; height: 70px; border-bottom: 1px solid #d8dee4; font-size: 39px; line-height: 64px; font-weight: 600; letter-spacing: -.87px; }
.readme p { margin: 22px 0 0 40px; font-size: 19.2px; line-height: 28px; letter-spacing: -.07px; }

/* sidebar */
.side { width: 370px; }
h2 { font-size: 19.2px; line-height: 30px; font-weight: 600; letter-spacing: -.3px; }
.about-head { display: flex; justify-content: space-between; align-items: center; height: 32px; }
.about-head svg { color: #57606a; margin-top: -2px; }
.desc { margin-top: 19px; padding-right: 15px; font-size: 19.2px; line-height: 30px; letter-spacing: -.08px; }
.side ul { list-style: none; margin-top: 15px; color: #57606a; }
.side li { height: 36.3px; display: flex; align-items: center; gap: 14px; }
.panel { border-top: 1px solid #d8dee4; font-size: 14.6px; line-height: 22.5px; letter-spacing: -.28px; color: #57606a; }
.panel h2 { color: #24292f; letter-spacing: -.36px; }
.panel a { color: #0969da; letter-spacing: -.2px; }
.rel { margin-top: 23px; height: 156px; padding-top: 31px; } .panel p { margin-top: 19px; }
.pkg { border-top-width: 2px; padding-top: 31px; }
.gh-footer { width: 1560px; margin-left: 170px; height: 58px; border-top: 1px solid #d5dfe6; padding: 50px 0 0 0; overflow: hidden; }
.footmark { width: 30px; height: 30px; color: #6e7781; }

/* taskbar */
.taskbar { height: 60px; flex: none; display: flex; padding-bottom: 2px; border-top: 1px solid #cbd0de; background: linear-gradient(90deg, #d6e6f4 0, #d6e2f1 130px, #dcd8e4 230px, #ddd9de 300px, #d8d9e6 400px, #d4e2f1 540px, #dfd6e6 660px, #e4d4e2 720px, #ebd8d7 850px, #efd9d0 980px, #e6d4dc 1120px, #e2d3e2 1200px, #d7dcea 1290px, #d3e1ee 1360px, #d5dbe9 1500px, #ddd9e0 1630px, #d9d8e6 1700px, #d3dfef 1800px, #d4dfed 1920px); }
.weather { width: 575px; display: flex; align-items: center; padding-left: 26px; gap: 9px; font-size: 14.6px; line-height: 20px; letter-spacing: -.35px; color: #1b1b1b; }
.weather > div { margin-top: -1px; }
.cloud { width: 30px; height: 22px; }
.cond { color: #555; }
.apps { display: flex; align-items: center; }
.app { width: 55px; height: 48px; display: flex; justify-content: center; align-items: center; position: relative; }
.on::before { content: ""; position: absolute; inset: 0 3px; background: #f5eeee; border-radius: 5px; border: 1px solid #e7dfe2; }
.on svg { position: relative; }
.ind { position: absolute; bottom: 0; left: 24px; width: 8px; height: 4px; border-radius: 2px; background: #857c80; }
.wide { left: 18px; width: 20px; background: #5b7585; }
.notif { position: absolute; right: 6px; top: 3px; width: 20px; height: 20px; border-radius: 50%; background: #5b7480; color: #fff; font: 13px/20px "Open Sans", sans-serif; text-align: center; }
.tray { margin-left: auto; display: flex; align-items: center; gap: 10px; padding-right: 24px; color: #1b1b1b; }
.t20 { width: 20px; height: 20px; }
.wifi { margin-left: 5px; }
.clock { width: 77px; text-align: right; font-size: 14.6px; line-height: 20px; letter-spacing: -.5px; white-space: nowrap; margin-top: -1px; }
.badge { width: 20px; height: 20px; margin-left: 4px; border-radius: 50%; background: #5b7480; color: #fff; font-size: 12px; line-height: 20px; text-align: center; }
```
